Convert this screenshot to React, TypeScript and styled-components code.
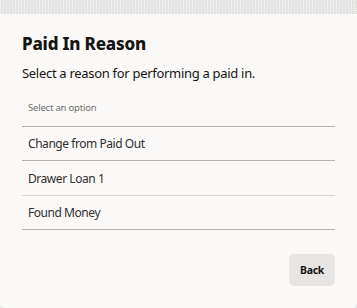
import React from "react";
import styled, { createGlobalStyle } from "styled-components";

const GlobalStyle = createGlobalStyle`
  * {
    box-sizing: border-box;
  }
  html, body {
    margin: 0;
    padding: 0;
  }
  body {
    font-family: "Noto Sans", "Liberation Sans", sans-serif;
    background-color: #e6e6e5;
    background-image:
      repeating-linear-gradient(90deg, rgba(255, 255, 255, 0.45) 0 1px, transparent 1px 3px),
      repeating-linear-gradient(0deg, rgba(0, 0, 0, 0.03) 0 1px, transparent 1px 2px);
    overflow: hidden;
  }
`;

const Backdrop = styled.div`
  padding-top: 14px;
  height: 308px;
`;

const Dialog = styled.div`
  height: 294px;
  background: #faf9f8;
  border-radius: 0 0 5px 5px;
  padding: 19px 22px 0;
  display: flex;
  flex-direction: column;
`;

const Title = styled.h1`
  margin: 0;
  font-size: 17px;
  line-height: 22px;
  font-weight: 800;
  letter-spacing: -0.2px;
  color: #161513;
`;

const Subtitle = styled.p`
  margin: 8px 0 0;
  font-size: 13px;
  line-height: 20px;
  letter-spacing: -0.3px;
  color: #161513;
`;

const SelectField = styled.div`
  margin-top: 12px;
  padding: 6px 6px 11px;
  border-bottom: 1px solid #b3b2b0;
`;

const Placeholder = styled.span`
  display: block;
  font-size: 9.5px;
  line-height: 14px;
  letter-spacing: -0.2px;
  color: #6f6e6c;
`;

const OptionList = styled.ul`
  list-style: none;
  margin: 0;
  padding: 0;
`;

const OptionRow = styled.li<{ $faint?: boolean }>`
  height: 34.4px;
  display: flex;
  align-items: center;
  padding: 0 6px;
  font-size: 12px;
  letter-spacing: -0.45px;
  color: #302f2d;
  border-bottom: 1px solid ${(p) => (p.$faint ? "#d6d5d3" : "#b3b2b0")};
`;

const Footer = styled.div`
  margin-top: 24px;
  display: flex;
  justify-content: flex-end;
`;

const BackButton = styled.button`
  height: 32px;
  width: 46px;
  padding: 0;
  border: 0;
  border-radius: 5px;
  background: #e6e5e3;
  font-family: "Noto Sans", "Liberation Sans", sans-serif;
  font-size: 10.5px;
  font-weight: 700;
  letter-spacing: -0.3px;
  color: #161513;
`;

const options = [
  { label: "Change from Paid Out" },
  { label: "Drawer Loan 1", faint: true },
  { label: "Found Money" },
];

export default function App() {
  return (
    <>
      <GlobalStyle />
      <Backdrop>
        <Dialog>
          <Title>Paid In Reason</Title>
          <Subtitle>Select a reason for performing a paid in.</Subtitle>
          <SelectField>
            <Placeholder>Select an option</Placeholder>
          </SelectField>
          <OptionList>
            {options.map((o) => (
              <OptionRow key={o.label} $faint={o.faint}>
                {o.label}
              </OptionRow>
            ))}
          </OptionList>
          <Footer>
            <BackButton>Back</BackButton>
          </Footer>
        </Dialog>
      </Backdrop>
    </>
  );
}
